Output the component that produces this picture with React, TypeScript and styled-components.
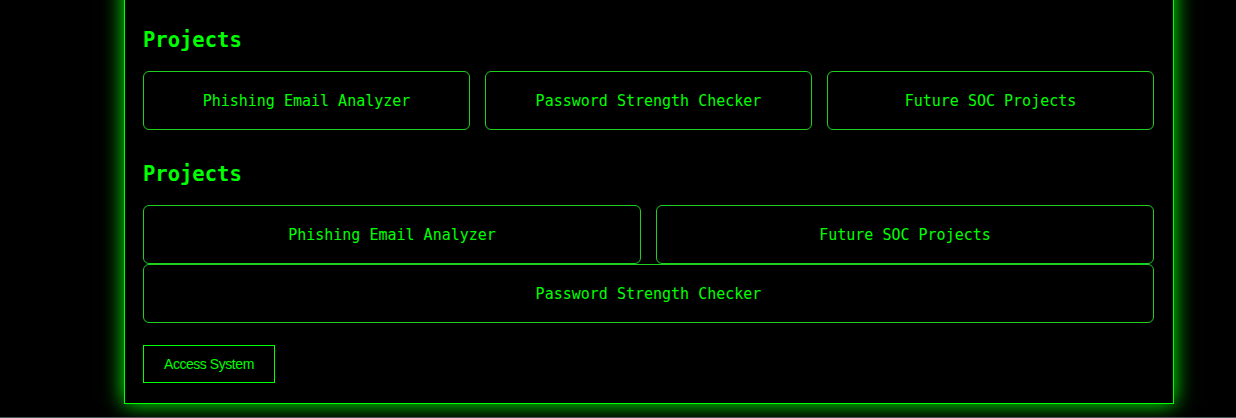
import { createGlobalStyle, styled } from 'styled-components';

const GlobalStyle = createGlobalStyle`
  html, body {
    margin: 0;
    padding: 0;
    background: #000;
    height: 418px;
    overflow: hidden;
  }
  body {
    font-family: "DejaVu Sans Mono", "Liberation Mono", monospace;
    color: #00ff00;
  }
`;

const firstProjects = ['Phishing Email Analyzer', 'Password Strength Checker', 'Future SOC Projects'];
const secondProjects = ['Phishing Email Analyzer', 'Future SOC Projects'];

const App = () => {
  return (
    <>
      <GlobalStyle />
      <Page>
        <Terminal>
          <Section>
            <Heading>Projects</Heading>
            <Grid $cols={3}>
              {firstProjects.map((p) => (
                <Card key={p}>{p}</Card>
              ))}
            </Grid>
          </Section>
          <Section>
            <Heading>Projects</Heading>
            <Grid $cols={2}>
              {secondProjects.map((p) => (
                <Card key={p}>{p}</Card>
              ))}
              <Card $wide>Password Strength Checker</Card>
            </Grid>
          </Section>
          <AccessButton>Access System</AccessButton>
        </Terminal>
        <BottomLine />
      </Page>
    </>
  );
};

export default App;

const Page = styled.div`
  display: flex;
  flex-direction: column;
  height: 418px;
`;

const Terminal = styled.main`
  width: 1050px;
  box-sizing: border-box;
  margin: -20px 0 0 124px;
  padding: 47px 19px 20px 18px;
  border: 1px solid #00ff00;
  background: #000;
  box-shadow: 0 0 20px #00ff00;
  display: flex;
  flex-direction: column;
  align-items: flex-start;
`;

const Section = styled.section`
  width: 100%;
  margin-bottom: 32px;

  & + button {
    margin-top: -10px;
  }
`;

const Heading = styled.h2`
  margin: 0 0 19px;
  font-size: 20.5px;
  line-height: 24px;
  font-weight: bold;
  color: #00ff00;
`;

const Grid = styled.div<{ $cols: number }>`
  display: grid;
  grid-template-columns: repeat(${({ $cols }) => $cols}, 1fr);
  column-gap: 15px;
  row-gap: 0;
`;

const Card = styled.div<{ $wide?: boolean }>`
  grid-column: ${({ $wide }) => ($wide ? '1 / -1' : 'auto')};
  height: 59px;
  box-sizing: border-box;
  border: 1px solid #1fcf1f;
  border-radius: 6px;
  display: flex;
  align-items: center;
  justify-content: center;
  font-size: 15px;
  color: #00ff00;
`;

const AccessButton = styled.button`
  font-family: "Liberation Sans", Arial, sans-serif;
  font-size: 14px;
  letter-spacing: -0.45px;
  line-height: 16px;
  padding: 10px 20px;
  background: #000;
  color: #00ff00;
  border: 1px solid #00ff00;
  border-radius: 0;
`;

const BottomLine = styled.div`
  margin-top: auto;
  height: 1px;
  background: #4d545e;
`;
